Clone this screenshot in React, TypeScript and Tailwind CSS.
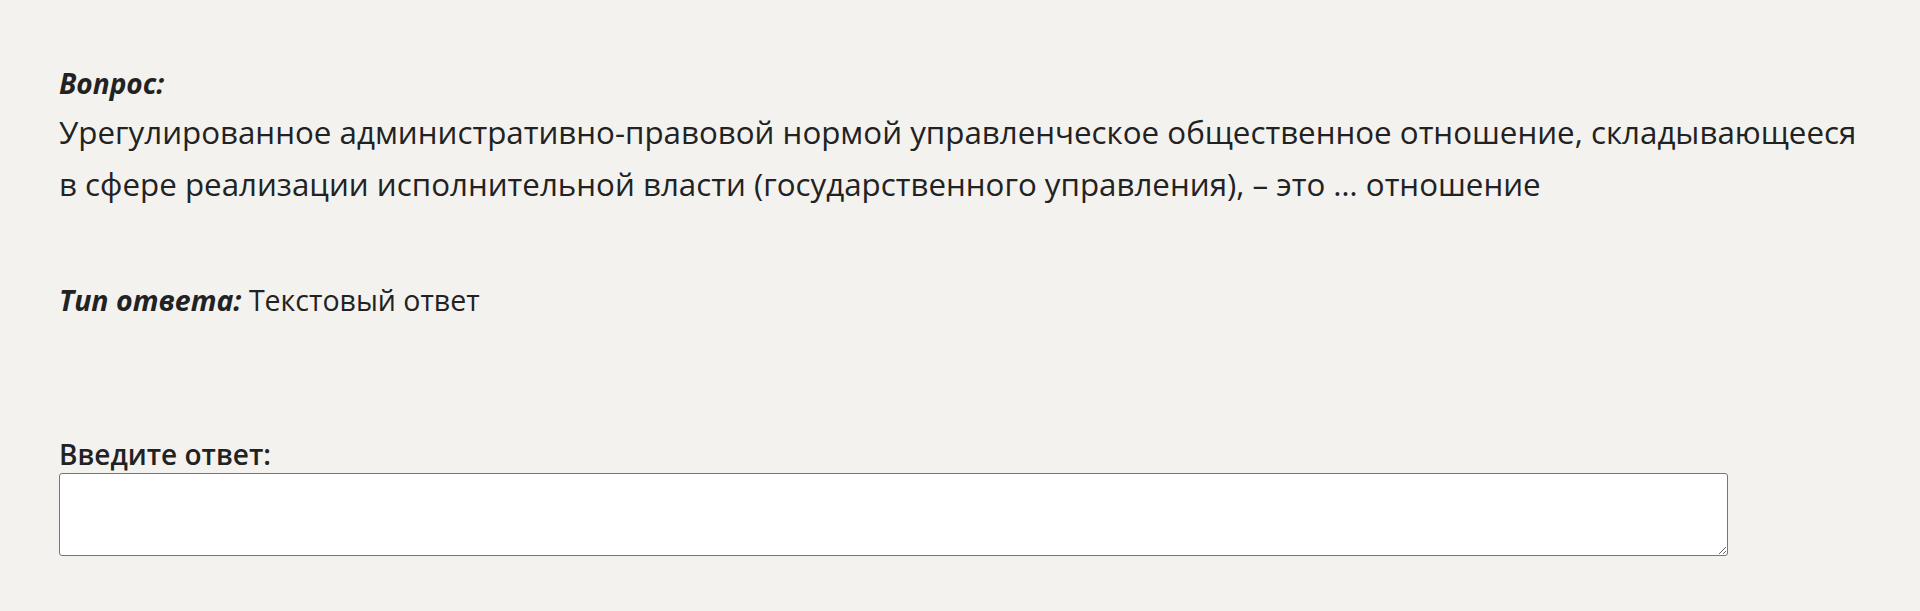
export default function App() {
  return (
    <div className="min-h-screen bg-[#f3f2ef] text-[#222222] font-['Open_Sans',sans-serif] px-[59px] pt-[60px] pb-10 text-[28px]">
      {/* Question */}
      <div className="italic font-bold leading-[46px]">Вопрос:</div>
      <p className="text-[31.3px] leading-[52px]">
        Урегулированное административно-правовой нормой управленческое общественное отношение, складывающееся
        <br />
        в сфере реализации исполнительной власти (государственного управления), – это … отношение
      </p>

      {/* Answer type */}
      <div className="mt-[64px] text-[28.5px] leading-[52px]">
        <span className="italic font-bold">Тип ответа:</span> Текстовый ответ
      </div>

      {/* Answer input */}
      <div className="mt-[109px]">
        <label htmlFor="answer" className="block font-semibold leading-[38px]">Введите ответ:</label>
        <textarea
          id="answer"
          className="block w-[1669px] h-[83px] bg-white border border-[#767676] rounded-[3px] px-2 py-1 text-[20px] outline-none"
        />
      </div>
    </div>
  );
}
